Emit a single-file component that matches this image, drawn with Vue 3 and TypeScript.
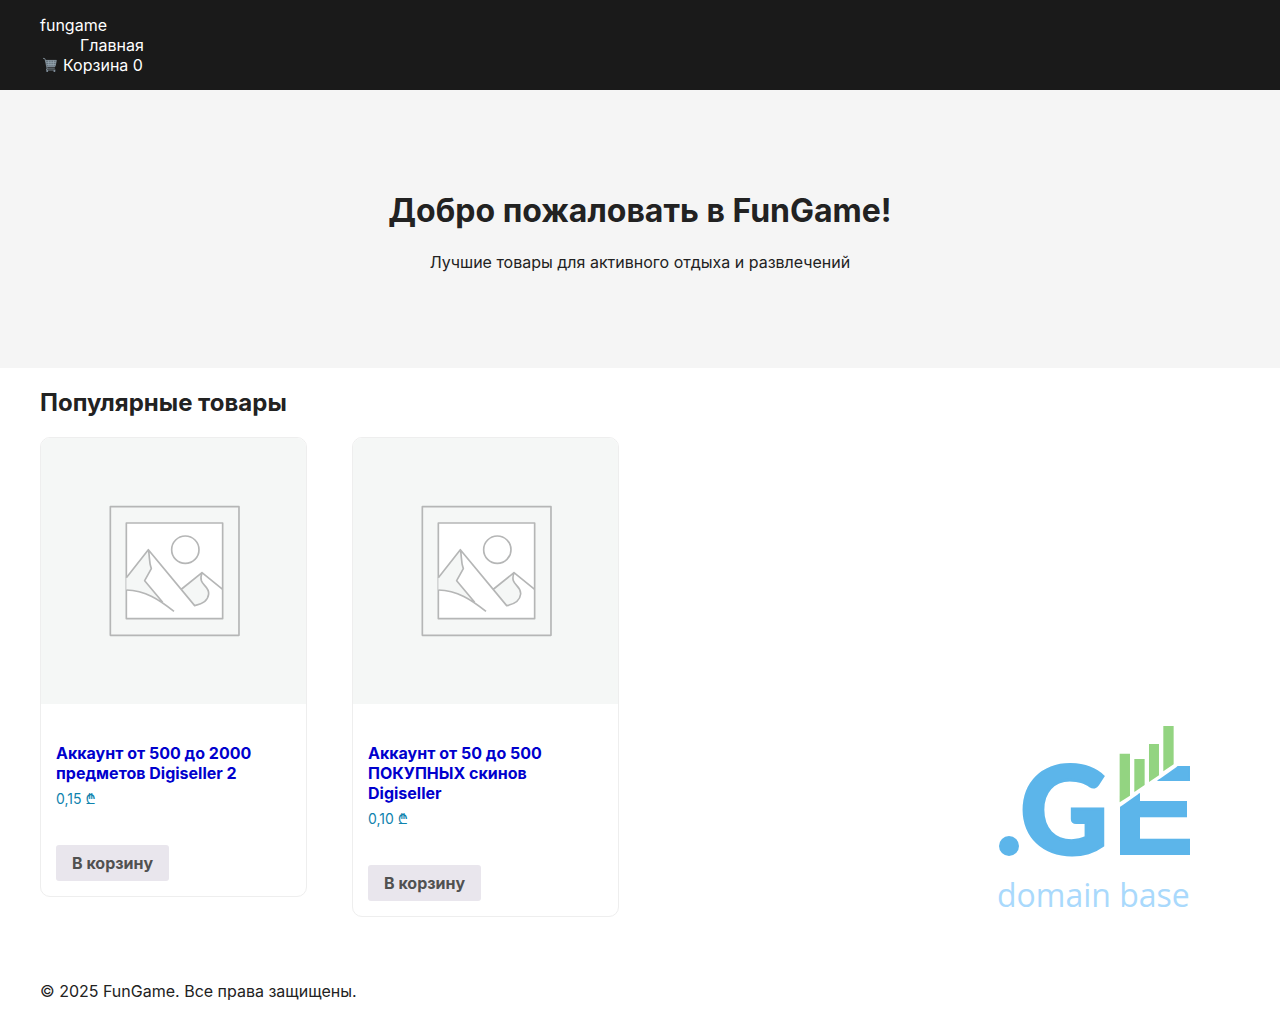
<script setup lang="ts">
import { ref } from 'vue'

interface Product {
  id: number
  title: string
  price: string
}

const products: Product[] = [
  { id: 1, title: 'Аккаунт от 500 до 2000 предметов Digiseller 2', price: '0,15 ₾' },
  { id: 2, title: 'Аккаунт от 50 до 500 ПОКУПНЫХ скинов Digiseller', price: '0,10 ₾' },
]

const cartCount = ref(0)

function addToCart() {
  cartCount.value += 1
}
</script>

<template>
  <div class="page">
    <header class="site-header">
      <div class="container">
        <a class="brand" href="#">fungame</a>
        <nav>
          <ul class="menu">
            <li><a href="#">Главная</a></li>
          </ul>
        </nav>
        <a class="cart" href="#cart">
          <svg class="cart-icon" viewBox="0 0 16 16" aria-hidden="true">
            <path d="M3.4 3.2H14.2L13 9.6H4.8Z" fill="#66737d" />
            <path d="M1 1.3L3 1.8L5 11.2H12.8M5 9.6H13L14.4 3.4H3.5M4.2 5.4H13.9M4.6 7.5H13.4M6.5 3.5L7 9.5M9 3.5V9.5M11.6 3.5L11 9.5M5 11.2L4.4 13H13.4" fill="none" stroke="#9aa9b4" stroke-width=".7" />
            <circle cx="5.2" cy="14" r="1" fill="#8493a0" />
            <circle cx="12.4" cy="14" r="1" fill="#8493a0" />
          </svg>
          <span>Корзина {{ cartCount }}</span>
        </a>
      </div>
    </header>

    <section class="hero">
      <h1>Добро пожаловать в FunGame!</h1>
      <p>Лучшие товары для активного отдыха и развлечений</p>
    </section>

    <main class="container">
      <h2>Популярные товары</h2>
      <div class="shelf">
        <ul class="products">
          <li v-for="product in products" :key="product.id" class="card">
            <svg class="thumb" viewBox="0 0 265 266" role="img" aria-label="Нет изображения">
              <rect width="265" height="266" fill="#f5f7f6" />
              <g transform="translate(49 52) scale(.3333)" fill="none" stroke="#b5b6b6" stroke-width="5" stroke-linejoin="round">
                <rect x="61" y="50" width="386" height="386" />
                <rect x="109" y="99" width="289" height="287" fill="#fff" />
                <path d="M109 263L175 179C180 200 176 215 184 236L164 272L218 337C184 314 148 301 109 300Z" fill="#f5f7f6" stroke="none" />
                <path d="M275 297L336 248C322 287 358 283 356 312C354 333 334 343 314 347Z" fill="#f5f7f6" stroke="none" />
                <path d="M109 263L175 179L314 347C334 343 354 333 356 312C358 283 322 287 336 248L398 298M275 297L336 248M175 179C180 200 176 215 184 236L164 272L218 337M109 300C166 301 208 329 252 364" />
                <circle cx="286" cy="179" r="41" />
              </g>
            </svg>
            <div class="info">
              <h3><a href="#">{{ product.title }}</a></h3>
              <p class="price">{{ product.price }}</p>
              <button type="button" @click="addToCart">В корзину</button>
            </div>
          </li>
        </ul>

        <svg class="logo" viewBox="0 0 198 188" role="img" aria-label=".GE domain base">
          <defs>
            <clipPath id="e-cut">
              <path d="M125 82L183 41H195V135H125Z" />
            </clipPath>
          </defs>
          <circle cx="14" cy="121" r="10" fill="#5cb5ea" />
          <text class="letter round" x="25" y="129">G</text>
          <text class="letter" x="117" y="129" clip-path="url(#e-cut)">E</text>
          <g transform="scale(.3333) translate(-45 -45)" fill="#93d481">
            <path d="M419 131H450V257L419 277Z" />
            <path d="M463 147H494V225L463 246Z" />
            <path d="M507 102H537V196L507 216Z" />
            <path d="M550 48H581V163L550 184Z" />
          </g>
          <text class="tagline" x="2" y="182">domain base</text>
        </svg>
      </div>
    </main>

    <footer class="container site-footer">
      <p>© 2025 FunGame. Все права защищены.</p>
    </footer>
  </div>
</template>

<style>
body {
  margin: 0;
  background: #fff;
}
</style>

<style scoped>
.page {
  color: #222;
  font-family: Inter, "DejaVu Sans", sans-serif;
  font-size: 16px;
  line-height: 20px;
}

.container {
  max-width: 1200px;
  margin: 0 auto;
  padding: 0 40px;
}

.site-header {
  padding: 15px 0;
  background: #1a1a1a;
}

.site-header a {
  color: #fff;
  text-decoration: none;
}

.brand {
  display: block;
}

.menu {
  margin: 0;
  padding: 0 0 0 40px;
  list-style: none;
}

.cart {
  display: flex;
  align-items: center;
  gap: 5px;
  padding-left: 2px;
}

.cart-icon {
  width: 16px;
  height: 16px;
}

.hero {
  padding: 80px 20px;
  background: #f5f5f5;
  text-align: center;
}

.hero h1 {
  margin: 21px 0;
  font-size: 32px;
  line-height: 40px;
}

.hero p {
  margin: 0 0 16px;
}

h2 {
  margin: 20px 0;
  font-size: 24px;
  line-height: 29px;
}

.shelf {
  display: flex;
  align-items: flex-end;
  justify-content: space-between;
}

.products {
  display: flex;
  flex-wrap: wrap;
  align-items: flex-start;
  gap: 45px;
  margin: 0;
  padding: 0;
  list-style: none;
}

.card {
  box-sizing: border-box;
  width: 267px;
  overflow: hidden;
  border: 1px solid #eee;
  border-radius: 10px;
}

.thumb {
  display: block;
  width: 100%;
}

.info {
  padding: 39px 15px 15px;
}

h3 {
  margin: 0 0 8px;
  font-size: 16px;
  line-height: 20px;
}

h3 a {
  color: #0000cd;
  text-decoration: none;
}

.price {
  margin: 0;
  color: #0f83ae;
  font-size: 14px;
  line-height: 16px;
}

button {
  display: block;
  height: 36px;
  margin-top: 38px;
  padding: 0 16px;
  border: 0;
  border-radius: 3px;
  background: #e9e6ed;
  color: #515151;
  font: inherit;
  font-weight: 700;
}

.logo {
  flex: none;
  width: 198px;
  margin: 0 47px 4px 0;
  overflow: visible;
}

.letter {
  fill: #5cb5ea;
  stroke: #5cb5ea;
  stroke-width: 2px;
  font-family: "Liberation Sans", sans-serif;
  font-size: 128px;
  font-weight: 700;
}

.letter.round {
  stroke-width: 3px;
  font-family: Lato, sans-serif;
  font-size: 122px;
  font-weight: 900;
}

.tagline {
  fill: #a9d9fc;
  font-family: "Open Sans", sans-serif;
  font-size: 32px;
}

.site-footer {
  padding-top: 64px;
  padding-bottom: 16px;
}

.site-footer p {
  margin: 0;
}
</style>
